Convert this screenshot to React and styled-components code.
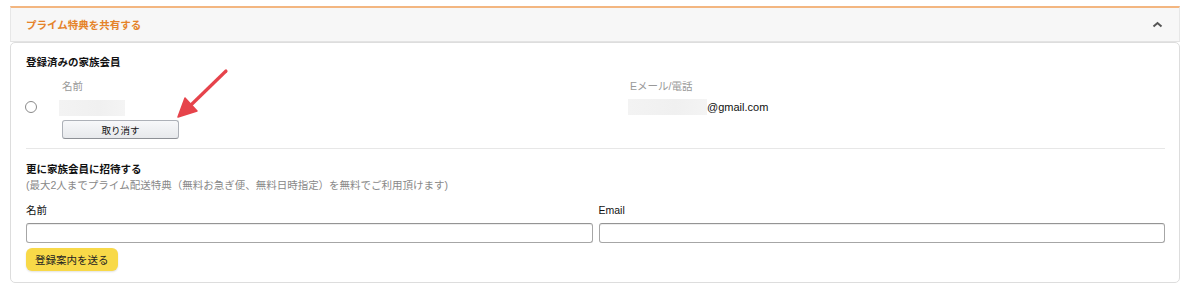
import React from "react";
import styled, { createGlobalStyle } from "styled-components";

const GlobalStyle = createGlobalStyle`
  body {
    margin: 0;
    background: #fff;
    font-family: "Liberation Sans", "Noto Sans CJK JP", sans-serif;
    color: #111;
  }
`;

const Page = styled.div`
  padding: 6px 20px 0 10px;
`;

const Header = styled.div`
  height: 33px;
  border-top: 2px solid #f3b680;
  border-left: 1px solid #e7e7e7;
  border-right: 1px solid #e7e7e7;
  border-bottom: 1px solid #e3e3e3;
  background: #f7f7f7;
  display: flex;
  align-items: center;
  justify-content: space-between;
  padding: 0 16px 0 15px;
`;

const HeaderTitle = styled.h2`
  margin: 0;
  font-size: 10.5px;
  font-weight: 700;
  color: #e5832a;
`;

const Card = styled.div`
  position: relative;
  border: 1px solid #dddddd;
  border-radius: 5px;
  padding: 12px 14px 11px 15px;
`;

const SectionTitle = styled.h3`
  margin: ${(p) => p.$top || 0}px 0 0;
  font-size: 10.5px;
  line-height: 14px;
  font-weight: 700;
  color: #111;
`;

const SubText = styled.p`
  margin: 2px 0 0;
  font-size: 10.5px;
  line-height: 14px;
  color: #888;
`;

const MemberGrid = styled.div`
  display: grid;
  grid-template-columns: 36px 566px 1fr;
  grid-template-rows: 14px 16px 19px;
  row-gap: 6px;
  margin-top: 10px;
  & > :nth-child(n + 4) {
    align-self: center;
  }
`;

const Label = styled.span`
  font-size: 10.5px;
  line-height: 14px;
  color: ${(p) => p.$muted ? "#999" : "#111"};
  padding-left: ${(p) => p.$indent || 0}px;
`;

const Radio = styled.span`
  width: 10px;
  height: 10px;
  border: 1px solid #8a8a8a;
  border-radius: 50%;
  margin-left: -1px;
`;

const Redacted = styled.span`
  display: inline-block;
  height: 16px;
  width: ${(p) => p.$w}px;
  margin-left: ${(p) => p.$shift || 0}px;
  background: linear-gradient(90deg, #f3f3f3, #f0f0f0 60%, #f4f4f4);
  vertical-align: middle;
`;

const EmailValue = styled.div`
  display: flex;
  align-items: center;
  font-size: 11px;
  color: #111;
`;

const CancelButton = styled.button`
  grid-column: 2;
  width: 117px;
  height: 19px;
  padding: 0;
  border: 1px solid #adb1b8;
  border-bottom-color: #8d9096;
  border-radius: 3px;
  background: linear-gradient(#f7f8fa, #e7e9ec);
  font-family: inherit;
  font-size: 9.5px;
  color: #111;
  margin-top: -2px;
`;

const Divider = styled.hr`
  margin: 8px 0 0;
  border: none;
  border-top: 1px solid #e7e7e7;
`;

const InviteGrid = styled.div`
  display: grid;
  grid-template-columns: 1fr 1fr;
  column-gap: 6px;
  row-gap: 6px;
  margin-top: 11px;
`;

const TextInput = styled.input`
  box-sizing: border-box;
  width: 100%;
  height: 20px;
  border: 1px solid #a6a6a6;
  border-top-color: #949494;
  border-radius: 3px;
  box-shadow: inset 0 1px 0 rgba(0, 0, 0, 0.07);
  background: #fff;
`;

const SendButton = styled.button`
  margin-top: 5px;
  height: 23px;
  padding: 0 9px;
  border: none;
  border-radius: 6px;
  background: #f8d948;
  box-shadow: 0 1px 2px rgba(0, 0, 0, 0.12);
  font-family: inherit;
  font-size: 10.5px;
  color: #222;
`;

// red annotation arrow lying over the card
const Arrow = styled.svg`
  position: absolute;
  left: 160px;
  top: 22px;
`;

function Chevron() {
  return (
    <svg width="11" height="7" viewBox="0 0 11 7">
      <path d="M1.5 5.5 L5.5 2 L9.5 5.5" fill="none" stroke="#555" strokeWidth="2" />
    </svg>
  );
}

export default function App() {
  return (
    <Page>
      <GlobalStyle />
      <Header>
        <HeaderTitle>プライム特典を共有する</HeaderTitle>
        <Chevron />
      </Header>
      <Card>
        <SectionTitle>登録済みの家族会員</SectionTitle>
        <MemberGrid>
          <span />
          <Label $muted>名前</Label>
          <Label $muted $indent={2}>Eメール/電話</Label>
          <Radio />
          <div>
            <Redacted $w={66} $shift={-3} />
          </div>
          <EmailValue>
            <Redacted $w={79} />
            @gmail.com
          </EmailValue>
          <CancelButton>取り消す</CancelButton>
        </MemberGrid>
        <Divider />
        <SectionTitle $top={13}>更に家族会員に招待する</SectionTitle>
        <SubText>(最大2人までプライム配送特典（無料お急ぎ便、無料日時指定）を無料でご利用頂けます)</SubText>
        <InviteGrid>
          <Label>名前</Label>
          <Label>Email</Label>
          <TextInput />
          <TextInput />
        </InviteGrid>
        <SendButton>登録案内を送る</SendButton>
        <Arrow width="70" height="70" viewBox="0 0 70 70">
          <path d="M55 6 L21 39" stroke="#e6434b" strokeWidth="3.2" strokeLinecap="round" />
          <path d="M7 52 L14 33 L26 46 Z" fill="#e6434b" stroke="#e6434b" strokeWidth="1.5" strokeLinejoin="round" />
        </Arrow>
      </Card>
    </Page>
  );
}
